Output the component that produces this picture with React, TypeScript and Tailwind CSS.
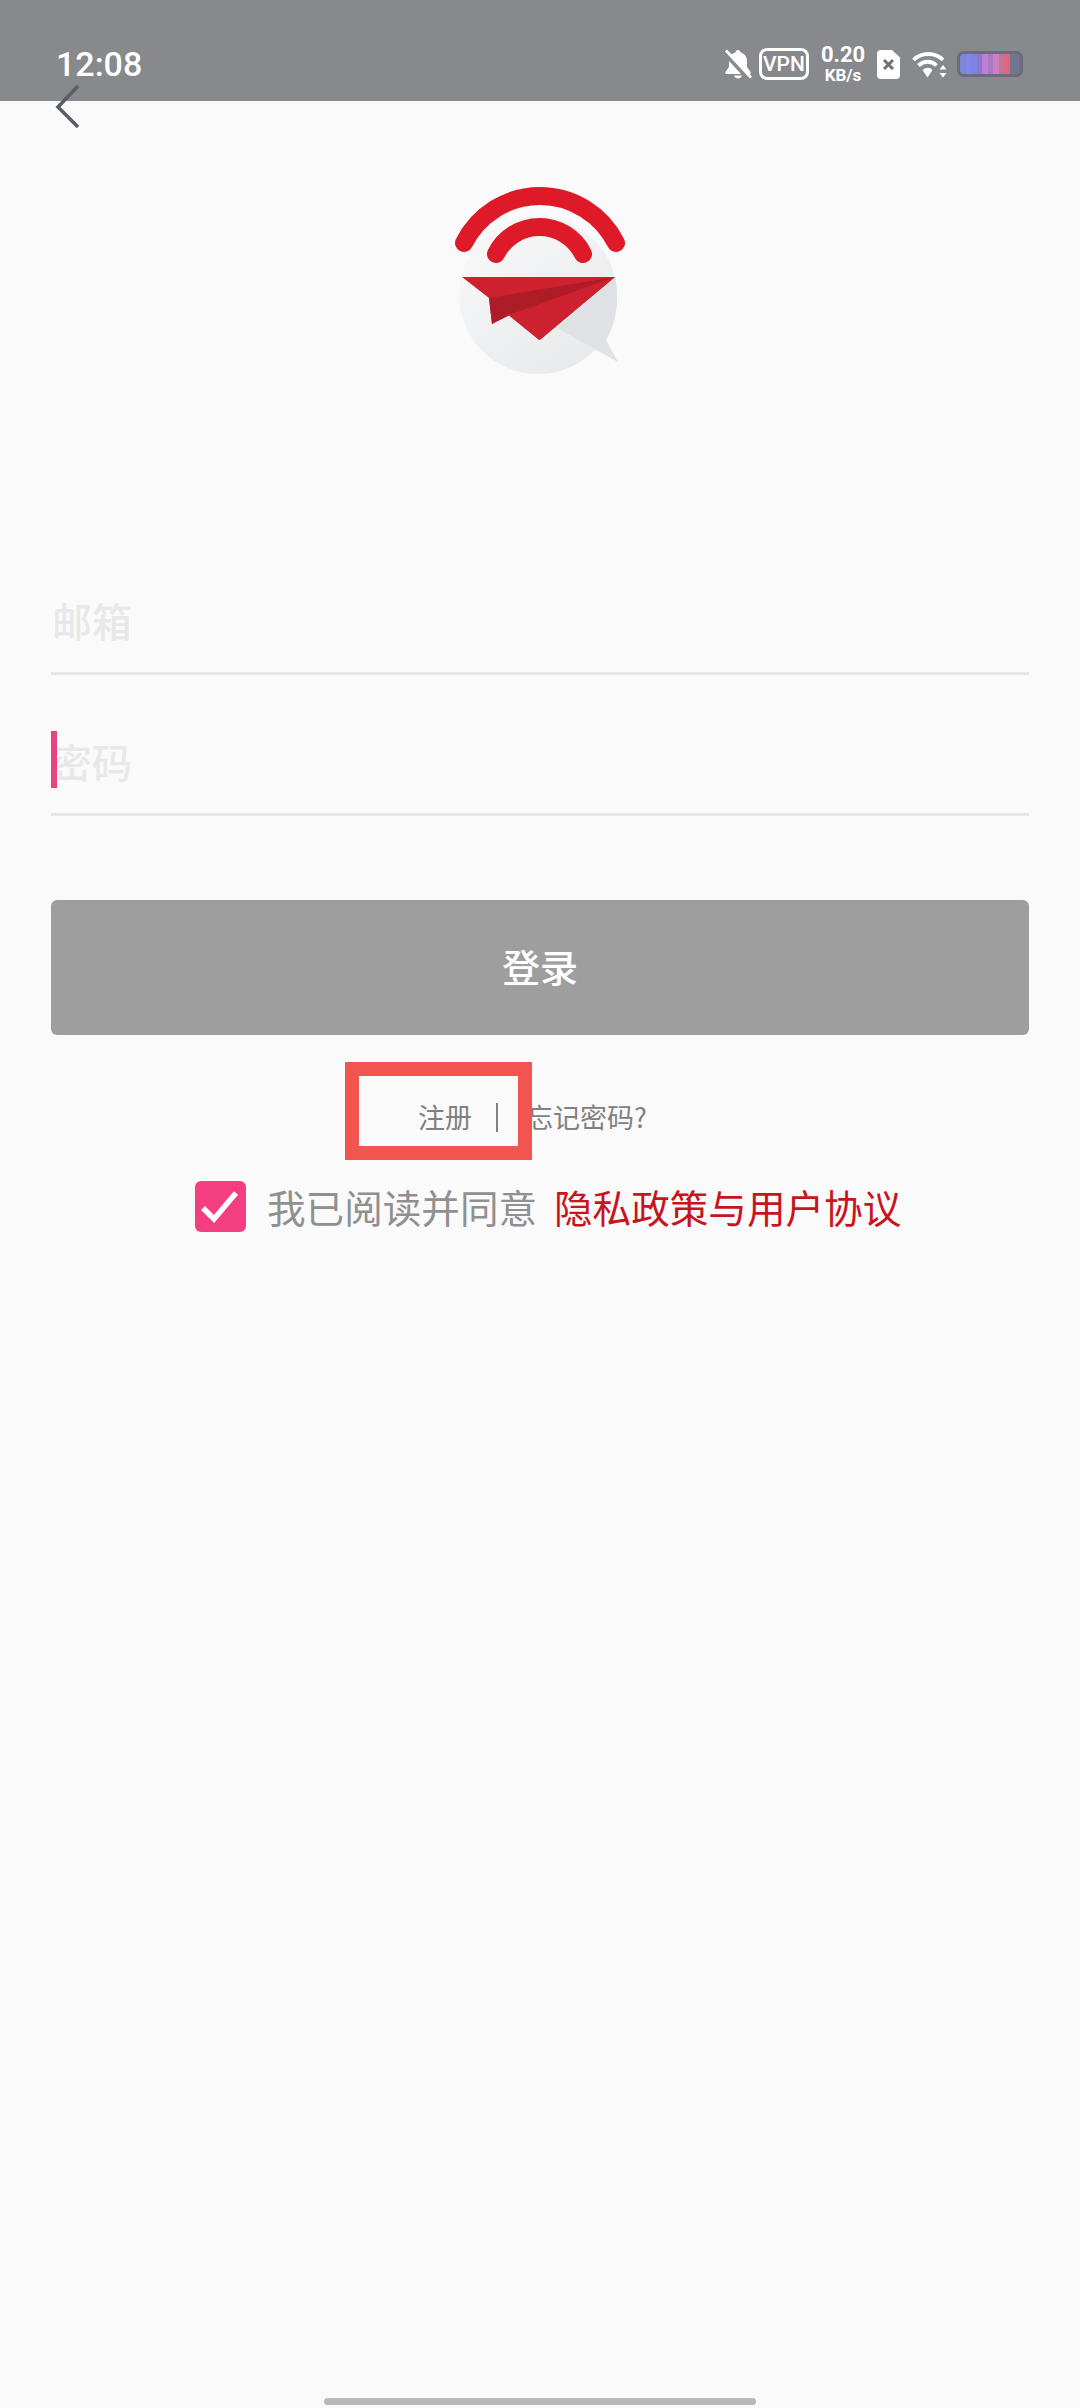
const cjk = '"Noto Sans CJK SC", "Noto Sans", sans-serif';

function BellOff() {
  return (
    <svg width="28" height="30" viewBox="0 0 28 30" className="block">
      <path d="M14 1c-1.500 0-2.500 1-2.600 2.400C7 4.500 5 8 5 12v6l-3.500 5v2h25v-2L23 18v-6c0-4-2-7.500-6.400-8.600C16.500 2 15.500 1 14 1z" fill="#fff" />
      <path d="M10 26.500c.6 1.700 2.200 3 4 3s3.400-1.300 4-3z" fill="#fff" />
      <path d="M1 4l24 26" stroke="#88898d" strokeWidth="5" />
      <path d="M2 1.500l25 27" stroke="#fff" strokeWidth="2.800" />
    </svg>
  );
}

function Sim() {
  return (
    <svg width="23" height="29" viewBox="0 0 23 29" className="block">
      <path d="M4 0h11l8 7.500V25a4 4 0 0 1-4 4H4a4 4 0 0 1-4-4V4a4 4 0 0 1 4-4z" fill="#fff" />
      <path d="M7 10l9 9M16 10l-9 9" stroke="#6f7075" strokeWidth="3" />
    </svg>
  );
}

function Wifi() {
  return (
    <svg width="35" height="27" viewBox="0 0 35 27" className="block">
      <path d="M1.500 9C9.500 1 23 1 31 9" fill="none" stroke="#fff" strokeWidth="3.800" />
      <path d="M6.500 14.500c5.500-5 13-5 18 0" fill="none" stroke="#fff" strokeWidth="3.800" />
      <path d="M10.500 19c3.500-3 7-3 10 0L15.500 26.500z" fill="#fff" />
      <path d="M31 14l3.500 4.500h-7zM31 26.500L27.500 22h7z" fill="#fff" />
    </svg>
  );
}

function Battery() {
  const bars = ['#7b86d8', '#7f88e6', '#8580e6', '#8c78c8', '#c07fd4', '#a878c0', '#d07cc0', '#b87898', '#e0687c'];
  return (
    <div className="flex h-[26px] w-[66px] items-stretch overflow-hidden rounded-[7px] border-[3px] border-[#6a6c7e] bg-[#70778f]">
      {bars.map((c, i) => (
        <div key={i} className="w-[5.500px]" style={{ backgroundColor: c }} />
      ))}
    </div>
  );
}

function Logo() {
  return (
    <svg width="220" height="210" viewBox="0 0 220 210" className="block">
      <defs>
        <linearGradient id="bubble" x1="0.100" y1="0.300" x2="0.600" y2="1">
          <stop offset="0" stopColor="#f6f6f7" />
          <stop offset="1" stopColor="#e8eaec" />
        </linearGradient>
      </defs>
      <circle cx="108" cy="125" r="79" fill="url(#bubble)" />
      <path d="M185 107L127 158l61 34-12-22c7-12 11-25 11-42 0-7-.700-14-2-21z" fill="#dfe1e5" />
      <path d="M34 73A85 85 0 0 1 186 73" fill="none" stroke="#de1a28" strokeWidth="18" strokeLinecap="round" />
      <path d="M66 84A48.500 48.500 0 0 1 153 84" fill="none" stroke="#de1a28" strokeWidth="18" strokeLinecap="round" />
      <path d="M32 107h153l-75 63-32-26-16 10-3-26z" fill="#cd2130" />
      <path d="M59 128l126-21-103 37-20 10z" fill="#ae1c28" />
      <path d="M82 144l103-37-76 63-32-26z" fill="#cd2130" />
    </svg>
  );
}

function Field({ label, caret, h }: { label: string; caret?: boolean; h: string }) {
  return (
    <div className={`relative flex items-center border-b-[3px] border-[#e6e6e6] ${h}`}>
      {caret && <span className="absolute left-0 top-[56px] h-[57px] w-[6px] bg-[#e5447f]" />}
      <span className="pl-[1px] text-[40px] font-medium leading-none text-[#e8e8e8]">{label}</span>
    </div>
  );
}

export default function App() {
  return (
    <div className="relative h-[2408px] w-[1080px] overflow-hidden bg-[#fbfafb]" style={{ fontFamily: cjk }}>
      <div className="flex h-[101px] items-center justify-between bg-[#88898d] pl-[56px] pr-[57px] pt-[27px] text-white">
        <span className="text-[34px] font-medium leading-none" style={{ fontFamily: 'Roboto, sans-serif' }}>12:08</span>
        <div className="flex items-center" style={{ fontFamily: 'Roboto, sans-serif' }}>
          <BellOff />
          <span className="ml-[7px] flex h-[32px] w-[50px] items-center justify-center rounded-[8px] border-[3px] border-white text-[21px] font-medium leading-none">VPN</span>
          <div className="ml-[12px] flex w-[44px] flex-col items-center font-bold leading-none">
            <span className="text-[22px]">0.20</span>
            <span className="mt-[1px] text-[17px]">KB/s</span>
          </div>
          <div className="ml-[12px]"><Sim /></div>
          <div className="ml-[12px]"><Wifi /></div>
          <div className="ml-[10px]"><Battery /></div>
        </div>
      </div>

      {/* back chevron sits over the status bar edge */}
      <svg width="30" height="48" viewBox="0 0 30 48" className="absolute left-[55px] top-[84px]">
        <path d="M23 2L3 23l20 20" fill="none" stroke="#5b5d66" strokeWidth="3.500" />
      </svg>

      <div className="mt-[69px] flex justify-center">
        <Logo />
      </div>

      <div className="mt-[220px] px-[51px]">
        <Field label="邮箱" h="h-[75px] pb-[33px]" />
        <Field label="密码" caret h="h-[141px] pt-[33px]" />

        <button className="mt-[84px] flex h-[135px] w-full items-center justify-center rounded-[6px] bg-[#9e9e9e] pb-[4px] text-[38px] font-medium text-white">
          登录
        </button>

        <div className="mt-[62px] flex h-[40px] items-center text-[27px] text-[#808080]">
          <span className="ml-[367px] w-[54px] whitespace-nowrap">注册</span>
          <span className="ml-[24px] h-[29px] w-[2px] bg-[#808080]" />
          <span className="ml-[28px] whitespace-nowrap">忘记密码?</span>
        </div>

        <div className="mt-[44px] flex h-[50px] items-center whitespace-nowrap text-[38.600px] leading-none">
          <span className="ml-[144px] flex h-[51px] w-[51px] shrink-0 items-center justify-center rounded-[6px] bg-[#f33f80]">
            <svg width="51" height="51" viewBox="0 0 51 51" className="block">
              <path d="M8 27l11 11 22-26" fill="none" stroke="#fff" strokeWidth="5.500" />
            </svg>
          </span>
          <span className="ml-[21px] text-[#909090]">我已阅读并同意</span>
          <span className="ml-[17px] text-[#c8141c]">隐私政策与用户协议</span>
        </div>
      </div>

      {/* annotation box drawn over the screen */}
      <div className="absolute left-[345px] top-[1062px] h-[98px] w-[187px] border-[14px] border-[#f2544f]" />

      <div className="absolute bottom-[3px] left-[324px] h-[7px] w-[432px] rounded-full bg-[#b8b8b8]" />
    </div>
  );
}
